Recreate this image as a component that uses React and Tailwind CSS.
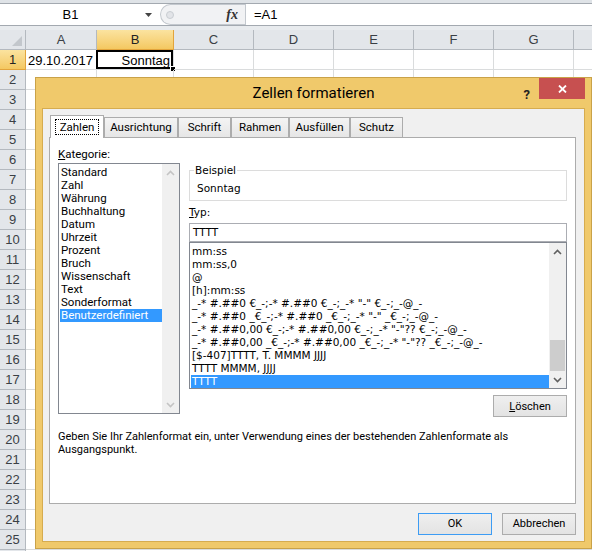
import React from 'react'

const COLS = [
  { id: 'A', w: 'w-[71px]' },
  { id: 'B', w: 'w-[77px]' },
  { id: 'C', w: 'w-[80px]' },
  { id: 'D', w: 'w-[80px]' },
  { id: 'E', w: 'w-[80px]' },
  { id: 'F', w: 'w-[80px]' },
  { id: 'G', w: 'w-[80px]' },
]

const ROWS = Array.from({ length: 25 }, (_, i) => i + 1)

const CATEGORIES = [
  'Standard',
  'Zahl',
  'Währung',
  'Buchhaltung',
  'Datum',
  'Uhrzeit',
  'Prozent',
  'Bruch',
  'Wissenschaft',
  'Text',
  'Sonderformat',
  'Benutzerdefiniert',
]

const FORMATS = [
  'mm:ss',
  'mm:ss,0',
  '@',
  '[h]:mm:ss',
  '_-* #.##0 €_-;-* #.##0 €_-;_-* "-" €_-;_-@_-',
  '_-* #.##0 _€_-;-* #.##0 _€_-;_-* "-" _€_-;_-@_-',
  '_-* #.##0,00 €_-;-* #.##0,00 €_-;_-* "-"?? €_-;_-@_-',
  '_-* #.##0,00 _€_-;-* #.##0,00 _€_-;_-* "-"?? _€_-;_-@_-',
  '[$-407]TTTT, T. MMMM JJJJ',
  'TTTT MMMM, JJJJ',
  'TTTT',
]

const TABS = [
  { label: 'Zahlen', w: 'w-[54px]', active: true },
  { label: 'Ausrichtung', w: 'w-[74px]' },
  { label: 'Schrift', w: 'w-[53px]' },
  { label: 'Rahmen', w: 'w-[58px]' },
  { label: 'Ausfüllen', w: 'w-[61px]' },
  { label: 'Schutz', w: 'w-[53px]' },
]

function Chevron({ up, className }) {
  return (
    <svg width="9" height="6" viewBox="0 0 9 6" className={className}>
      <polyline
        points={up ? '1,5 4.5,1.5 8,5' : '1,1 4.5,4.5 8,1'}
        fill="none"
        stroke="currentColor"
        strokeWidth="1.6"
      />
    </svg>
  )
}

// vertical scrollbar: arrows + track, thumb pinned to the bottom when given
function ScrollBar({ thumb, disabled }) {
  const arrow = disabled ? 'text-[#c4c4c4]' : 'text-[#606060]'
  return (
    <div className="flex w-[17px] shrink-0 flex-col bg-[#f0f0f0]">
      <div className={`flex h-[17px] items-center justify-center ${arrow}`}>
        <Chevron up />
      </div>
      <div className="flex flex-1 flex-col justify-end px-[1px]">
        {thumb && <div className="h-[31px] bg-[#cdcdcd]" />}
      </div>
      <div className={`flex h-[17px] items-center justify-center ${arrow}`}>
        <Chevron />
      </div>
    </div>
  )
}

function FormulaBar() {
  return (
    <div className="flex h-[30px] shrink-0 flex-col bg-[#e8ebee]">
      <div className="h-[4px] border-b border-[#a3a9b0] bg-[#dfe3e7]" />
      <div className="flex h-[21px] bg-white">
        <div className="flex w-[158px] items-center">
          <span className="flex-1 text-center text-[13px] text-black">B1</span>
          <svg width="16" height="6" viewBox="0 0 16 6" className="mr-[1px]">
            <polygon points="4,1 11,1 7.5,5" fill="#444" />
          </svg>
        </div>
        <div className="ml-[2px] flex w-[85px] items-center rounded-l-full border border-r-0 border-[#c3c8ce] bg-[#f1f2f4]">
          <span className="ml-[5px] h-[8px] w-[8px] rounded-full border border-[#c9cdd2] bg-[#e2e4e8]" />
          <span className="ml-auto mr-[7px] font-['Liberation_Serif',serif] text-[14px] font-bold italic text-[#333]">
            fx
          </span>
        </div>
        <div className="flex flex-1 items-center border-l border-[#c3c8ce] pl-[8px] text-[13px] text-black">
          =A1
        </div>
      </div>
      <div className="border-t border-[#a3a9b0]" />
    </div>
  )
}

function HeaderRow() {
  return (
    <div className="flex h-[20px] shrink-0 text-[13px]">
      <div className="relative w-[26px] shrink-0 border-r border-b border-[#b4b9bf] bg-[#e3e6ea]">
        <svg width="12" height="12" viewBox="0 0 12 12" className="absolute right-[2px] bottom-[2px]">
          <polygon points="11,1 11,11 1,11" fill="#c3c7cc" />
        </svg>
      </div>
      {COLS.map((c) => (
        <div
          key={c.id}
          className={`${c.w} flex shrink-0 items-center justify-center border-r border-b ${
            c.id === 'B'
              ? 'border-[#e2a43c] bg-gradient-to-b from-[#fbe39f] to-[#f4c860] text-[#222]'
              : 'border-[#b4b9bf] bg-[#e3e6ea] text-[#3a3f45]'
          }`}
        >
          {c.id}
        </div>
      ))}
      <div className="flex-1 border-b border-[#b4b9bf] bg-[#e3e6ea]" />
    </div>
  )
}

function SheetRow({ n }) {
  const active = n === 1
  return (
    <div className="flex h-[20px] shrink-0 text-[13px]">
      <div
        className={`flex w-[26px] shrink-0 items-center justify-center border-r border-b pt-[1px] ${
          active
            ? 'border-[#e2a43c] bg-gradient-to-b from-[#fbe39f] to-[#f4c860] text-[#222]'
            : 'border-[#b4b9bf] bg-[#e3e6ea] text-[#3a3f45]'
        }`}
      >
        {n}
      </div>
      {COLS.map((c) => (
        <div
          key={c.id}
          className={`${c.w} relative flex shrink-0 items-center justify-end border-r border-b border-[#dadcdd] pt-[2px] pr-[3px] text-black`}
        >
          {active && c.id === 'A' && '29.10.2017'}
          {active && c.id === 'B' && (
            <>
              Sonntag
              <div className="absolute -left-px top-0 right-0 bottom-0 border-2 border-black" />
              <div className="absolute right-[-3px] bottom-[-3px] h-[6px] w-[6px] border border-white bg-black" />
            </>
          )}
        </div>
      ))}
      <div className="flex-1 border-b border-[#dadcdd]" />
    </div>
  )
}

function Button({ children, primary, className = '' }) {
  return (
    <div
      className={`flex h-[22px] w-[74px] items-center justify-center border bg-gradient-to-b from-[#efefef] to-[#e3e3e3] font-['Roboto',sans-serif] text-[11px] text-black ${
        primary ? 'border-[#3c9cf4]' : 'border-[#acacac]'
      } ${className}`}
    >
      {children}
    </div>
  )
}

function FormatDialog() {
  return (
    <div className="absolute left-[35px] top-[77px] flex h-[472px] w-[557px] flex-col border border-[#c9a249] bg-[#f0c96b] px-[6px] pb-[6px] font-['Roboto',sans-serif]">
      <div className="relative flex h-[30px] shrink-0 items-center justify-center">
        <span className="text-[15px] text-black">Zellen formatieren</span>
        <span className="absolute right-[55px] top-[7px] text-[13px] font-bold text-[#222]">?</span>
        <div className="absolute right-0 top-0 flex h-[21px] w-[46px] items-center justify-center bg-[#c75050]">
          <svg width="9" height="8" viewBox="0 0 9 8">
            <path d="M1 0.5 L8 7.5 M8 0.5 L1 7.5" stroke="white" strokeWidth="1.8" />
          </svg>
        </div>
      </div>

      <div className="flex flex-1 flex-col border border-[#d6ac4f] bg-[#f0f0f0] pl-[6px] pr-[8px] pt-[6px]">
        {/* tab strip */}
        <div className="ml-[1px] flex h-[22px] items-end">
          {TABS.map((t) =>
            t.active ? (
              <div
                key={t.label}
                className={`${t.w} relative z-10 -mb-px flex h-[23px] items-center justify-center border border-b-0 border-[#acacac] bg-white`}
              >
                <span className="border border-dotted border-black px-[4px] text-[11.5px] leading-[14px] text-black">
                  {t.label}
                </span>
              </div>
            ) : (
              <div
                key={t.label}
                className={`${t.w} flex h-[20px] items-center justify-center border border-b-0 border-[#acacac] bg-gradient-to-b from-[#f4f4f4] to-[#e6e6e6] pt-[1px] text-[11.5px] text-black`}
              >
                {t.label}
              </div>
            )
          )}
        </div>

        {/* panel */}
        <div className="flex h-[367px] shrink-0 flex-col border border-[#acacac] bg-white">
          <div className="flex items-start pt-[9px]">
            <div className="ml-[8px] flex w-[122px] flex-col">
              <div className="h-[15px] text-[11.5px] leading-[15px] text-black">
                <u>K</u>ategorie:
              </div>
              <div className="mt-px flex h-[251px] border border-[#828790] bg-white">
                <div className="flex-1 pt-[2px] pl-px text-[11.5px] leading-[13px] text-black">
                  {CATEGORIES.map((c) => (
                    <div
                      key={c}
                      className={`h-[13px] pl-px ${c === 'Benutzerdefiniert' ? 'bg-[#3399ff] text-white' : ''}`}
                    >
                      {c}
                    </div>
                  ))}
                </div>
                <ScrollBar disabled />
              </div>
            </div>

            <div className="ml-[9px] flex w-[378px] flex-col font-['DejaVu_Sans',sans-serif] text-[10.5px] leading-[13px] text-black">
              <fieldset className="mt-[17px] h-[37px] border border-[#dcdcdc]">
                <legend className="ml-[4px] px-px leading-[13px]">Beispiel</legend>
                <div className="pl-[7px] pt-[5px]">Sonntag</div>
              </fieldset>
              <div className="mt-[5px] h-[13px]">
                <u>T</u>yp:
              </div>
              <div className="mt-[4px] flex h-[19px] items-center border border-[#abadb3] pl-[3px]">TTTT</div>
              <div className="flex h-[147px] border border-[#828790]">
                <div className="flex-1 overflow-hidden pt-[2px] pl-px">
                  {FORMATS.map((f, i) => (
                    <div
                      key={i}
                      className={`h-[13px] whitespace-pre pl-px ${
                        i === FORMATS.length - 1 ? 'bg-[#3399ff] text-white' : ''
                      }`}
                    >
                      {f}
                    </div>
                  ))}
                </div>
                <ScrollBar thumb />
              </div>
              <Button className="mt-[6px] self-end">
                <span>
                  <u>L</u>öschen
                </span>
              </Button>
            </div>
          </div>

          <p className="mt-[13px] pl-[8px] text-[11px] leading-[13px] text-black">
            Geben Sie Ihr Zahlenformat ein, unter Verwendung eines der bestehenden Zahlenformate als
            <br />
            Ausgangspunkt.
          </p>
        </div>

        <div className="mt-[9px] flex justify-end gap-[10px]">
          <Button primary>OK</Button>
          <Button>Abbrechen</Button>
        </div>
      </div>
    </div>
  )
}

export default function App() {
  return (
    <div className="relative h-[551px] w-[592px] overflow-hidden bg-white font-['Liberation_Sans',Arial,sans-serif]">
      <div className="flex h-full flex-col">
        <FormulaBar />
        <HeaderRow />
        {ROWS.map((n) => (
          <SheetRow key={n} n={n} />
        ))}
        <div className="flex flex-1">
          <div className="w-[26px] shrink-0 border-r border-[#b4b9bf] bg-[#e3e6ea]" />
        </div>
      </div>
      <FormatDialog />
    </div>
  )
}
